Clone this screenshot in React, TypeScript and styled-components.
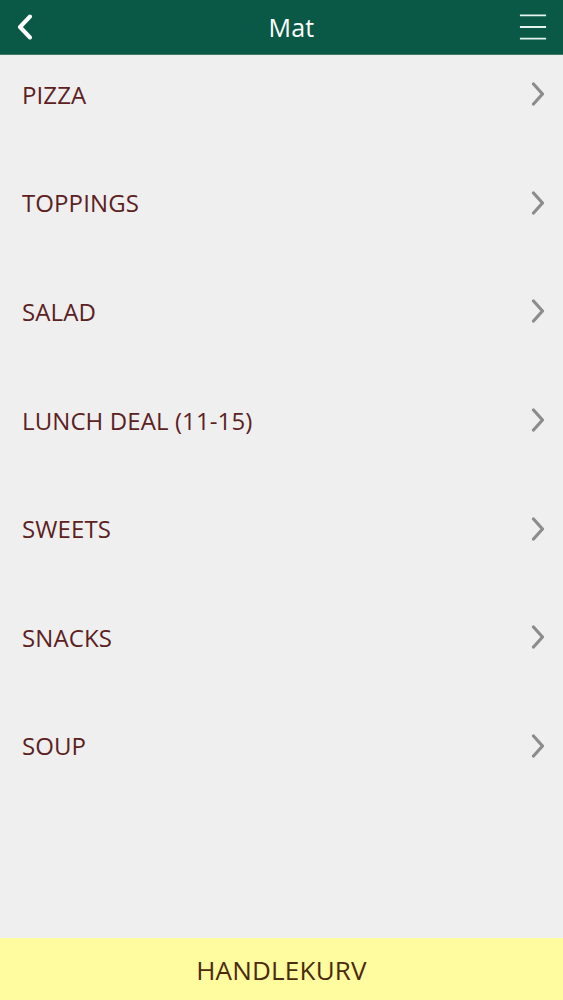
import styled, { createGlobalStyle } from 'styled-components';

const GlobalStyle = createGlobalStyle`
  html, body {
    margin: 0;
    padding: 0;
    background: #efeff0;
  }
  body {
    font-family: 'Open Sans', 'Noto Sans', sans-serif;
  }
`;

const Screen = styled.div`
  width: 563px;
  height: 1000px;
  display: flex;
  flex-direction: column;
  background: #efeff0;
  overflow: hidden;
`;

const TopBar = styled.header`
  height: 54px;
  flex: none;
  background: #0a5946;
  display: grid;
  grid-template-columns: 60px 1fr 60px;
  align-items: center;
  box-shadow: 0 1px 0 #3e7a68;
`;

const IconButton = styled.button<{ $align: 'start' | 'end' }>`
  border: 0;
  background: none;
  padding: 0 16px;
  height: 100%;
  display: flex;
  align-items: center;
  justify-content: ${(p) => (p.$align === 'start' ? 'flex-start' : 'flex-end')};
  color: #ffffff;
  cursor: pointer;
`;

const Title = styled.h1`
  margin: 0;
  padding-left: 20px;
  text-align: center;
  color: #ffffff;
  font-size: 25px;
  font-weight: 400;
  letter-spacing: 0.2px;
`;

const MenuList = styled.ul`
  list-style: none;
  margin: 0;
  padding: 0;
  flex: 1;
`;

const MenuRow = styled.li`
  height: 108.6px;
  box-sizing: border-box;
  padding: 0 17px 28px 22px;
  display: flex;
  align-items: center;
  justify-content: space-between;
  cursor: pointer;
`;

const RowLabel = styled.span`
  color: #5c2121;
  font-size: 24px;
  letter-spacing: 0.1px;
`;

const CartBar = styled.footer`
  height: 62px;
  flex: none;
  padding-top: 2px;
  box-sizing: border-box;
  background: #fefc9f;
  display: flex;
  align-items: center;
  justify-content: center;
  color: #4b2a0e;
  font-size: 26px;
  letter-spacing: 0.2px;
`;

const categories = ['PIZZA', 'TOPPINGS', 'SALAD', 'LUNCH DEAL (11-15)', 'SWEETS', 'SNACKS', 'SOUP'];

const BackIcon = () => (
  <svg width="18" height="26" viewBox="0 0 18 26" fill="none">
    <path d="M14 2.5 L4 13 L14 23.5" stroke="currentColor" strokeWidth="4" strokeLinecap="round" strokeLinejoin="round" />
  </svg>
);

const MenuIcon = () => (
  <svg width="30" height="28" viewBox="0 0 30 28" fill="none">
    <path d="M1 1.5 H29 M1 14 H29 M1 26.5 H29" stroke="#e6f4ef" strokeWidth="2" />
  </svg>
);

const Chevron = () => (
  <svg width="16" height="24" viewBox="0 0 16 24" fill="none">
    <path d="M3.5 2 L12.5 12 L3.5 22" stroke="#8c8c8c" strokeWidth="3.2" strokeLinecap="round" strokeLinejoin="round" />
  </svg>
);

export default function App() {
  return (
    <Screen>
      <GlobalStyle />
      <TopBar>
        <IconButton $align="start" aria-label="Tilbake">
          <BackIcon />
        </IconButton>
        <Title>Mat</Title>
        <IconButton $align="end" aria-label="Meny">
          <MenuIcon />
        </IconButton>
      </TopBar>
      <MenuList>
        {categories.map((name) => (
          <MenuRow key={name}>
            <RowLabel>{name}</RowLabel>
            <Chevron />
          </MenuRow>
        ))}
      </MenuList>
      <CartBar>HANDLEKURV</CartBar>
    </Screen>
  );
}
